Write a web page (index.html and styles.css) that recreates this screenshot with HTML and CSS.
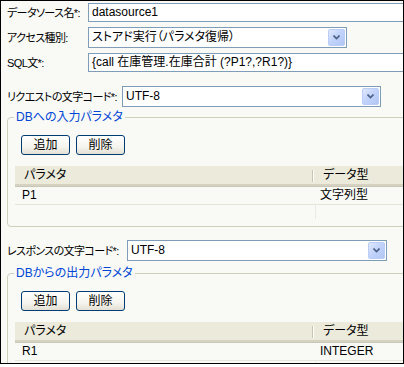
FILE: index.html
```html
<!DOCTYPE html>
<html lang="ja">
<head>
<meta charset="utf-8">
<link rel="stylesheet" href="styles.css">
</head>
<body>
<div class="window">
  <div class="content">
    <div class="form-grid">
      <label class="lbl">データソース名*:</label>
      <div class="textbox wide">datasource1</div>
      <label class="lbl">アクセス種別:</label>
      <div class="combo c-access"><span class="val">ストアド実行（パラメタ復帰）</span><span class="drop"><svg width="7" height="5" viewBox="0 0 7 5"><path d="M0.5 0.5 L3.5 3.5 L6.5 0.5" fill="none" stroke="#4d6185" stroke-width="1.6"/></svg></span></div>
      <label class="lbl">SQL文*:</label>
      <div class="textbox wide">{call 在庫管理.在庫合計 (?P1?,?R1?)}</div>
    </div>

    <div class="row row-req">
      <label class="lbl lbl-req">リクエストの文字コード*:</label>
      <div class="combo c-req"><span class="val">UTF-8</span><span class="drop"><svg width="7" height="5" viewBox="0 0 7 5"><path d="M0.5 0.5 L3.5 3.5 L6.5 0.5" fill="none" stroke="#4d6185" stroke-width="1.6"/></svg></span></div>
    </div>

    <fieldset class="group g-in">
      <legend>DBへの入力パラメタ</legend>
      <div class="buttons">
        <button class="btn">追加</button>
        <button class="btn">削除</button>
      </div>
      <div class="grid">
        <div class="g-head">
          <div class="h-cell h-name">パラメタ</div>
          <div class="h-cell h-type">データ型</div>
        </div>
        <div class="g-row">
          <div class="cell c-name">P1</div>
          <div class="cell c-type">文字列型</div>
        </div>
        <div class="g-fill"><div class="fill-name"></div><div class="fill-type"></div></div>
      </div>
    </fieldset>

    <div class="row row-res">
      <label class="lbl lbl-res">レスポンスの文字コード*:</label>
      <div class="combo c-res"><span class="val">UTF-8</span><span class="drop"><svg width="7" height="5" viewBox="0 0 7 5"><path d="M0.5 0.5 L3.5 3.5 L6.5 0.5" fill="none" stroke="#4d6185" stroke-width="1.6"/></svg></span></div>
    </div>

    <fieldset class="group g-out">
      <legend>DBからの出力パラメタ</legend>
      <div class="buttons">
        <button class="btn">追加</button>
        <button class="btn">削除</button>
      </div>
      <div class="grid">
        <div class="g-head">
          <div class="h-cell h-name">パラメタ</div>
          <div class="h-cell h-type">データ型</div>
        </div>
        <div class="g-row">
          <div class="cell c-name">R1</div>
          <div class="cell c-type">INTEGER</div>
        </div>
        <div class="g-fill"><div class="fill-name"></div><div class="fill-type"></div></div>
      </div>
    </fieldset>
  </div>
</div>
</body>
</html>
```

FILE: styles.css
```css
* { box-sizing: border-box; }
html, body { margin: 0; padding: 0; background: #ffffff; }
body {
  font-family: "Liberation Sans", "Noto Sans CJK JP", sans-serif;
  font-size: 12px;
  font-feature-settings: "palt";
  color: #000;
}
.window {
  width: 404px;
  height: 364px;
  border: 1px solid #000;
  background: #f9f9f6;
  overflow: hidden;
}
.content {
  width: 560px;
  padding: 2px 0 0 6px;
}
.form-grid {
  display: grid;
  grid-template-columns: 81px auto;
  grid-template-rows: 19px 21px 19px;
  row-gap: 5px;
  align-items: center;
  justify-items: start;
}
.lbl {
  white-space: nowrap;
  line-height: 14px;
  font-size: 11px;
  letter-spacing: -0.6px;
}
.textbox {
  height: 19px;
  border: 1px solid #7f9db9;
  background: #fff;
  padding: 0 3px;
  line-height: 17px;
  white-space: nowrap;
}
.wide { width: 420px; }
.combo {
  height: 21px;
  border: 1px solid #7f9db9;
  background: #fff;
  display: flex;
  align-items: center;
  padding: 1px;
}
.combo .val { padding-left: 2px; line-height: 17px; white-space: nowrap; flex: 1; }
.drop {
  width: 17px;
  height: 17px;
  border: 1px solid #b9cdf7;
  border-radius: 2px;
  background: linear-gradient(135deg, #dfe8fe 0%, #c3d4fb 45%, #b1c6f5 100%);
  display: flex;
  align-items: center;
  justify-content: center;
}
.drop svg { display: block; }
.c-access { width: 259px; }
.row { display: flex; align-items: center; }
.row-req { margin-top: 14px; }
.lbl-req { width: 115px; flex: none; }
.c-req { width: 259px; }
.row-res { margin-top: 13px; }
.lbl-res { width: 120px; flex: none; }
.c-res { width: 260px; }

.group {
  margin: 3px 0 0 0;
  width: 520px;
  border: 1px solid #d0d0bf;
  border-radius: 4px;
  padding: 11px 0 7px 7px;
}
.g-out { margin-top: 5px; }
.group legend {
  color: #0046d5;
  padding: 0 2px;
  margin-left: -1px;
  line-height: 14px;
}
.buttons {
  display: flex;
  gap: 6px;
  margin-left: 6px;
}
.btn {
  width: 49px;
  height: 20px;
  border: 1px solid #003c74;
  border-radius: 3px;
  background: linear-gradient(#ffffff 0%, #f5f4ee 60%, #e3e0d4 100%);
  font: inherit;
  font-feature-settings: "palt";
  color: #000;
  padding: 0;
  line-height: 16px;
}
.grid { margin-top: 11px; }
.g-head {
  display: flex;
  height: 21px;
  background: #ebeadb;
  border-bottom: 1px solid #cbc7b8;
  box-shadow: inset 0 -2px 0 #d6d2c2;
}
.h-cell { line-height: 19px; white-space: nowrap; }
.h-name {
  width: 298px;
  padding-left: 9px;
  position: relative;
}
.h-name::after {
  content: "";
  position: absolute;
  right: 0;
  top: 4px;
  bottom: 4px;
  width: 1px;
  background: #c7c5b2;
  box-shadow: 1px 0 0 #ffffff;
}
.h-type { padding-left: 10px; }
.g-row {
  display: flex;
  height: 18px;
  border-bottom: 1px solid #e6e5dc;
}
.cell { line-height: 17px; white-space: nowrap; }
.c-name { width: 300px; padding-left: 7px; }
.c-type { padding-left: 5px; }
.g-fill { display: flex; height: 14px; }
.fill-name { width: 300px; }
.fill-type { border-left: 1px solid #ecebe3; width: 200px; }
```
